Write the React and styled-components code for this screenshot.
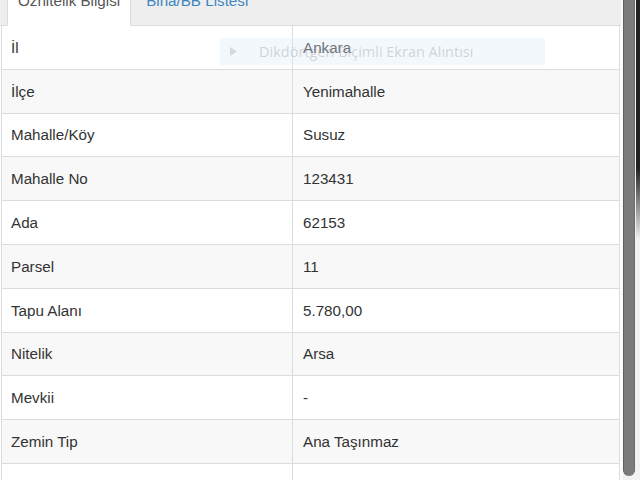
import React from "react";
import styled, { createGlobalStyle } from "styled-components";

const Global = createGlobalStyle`
  html, body { margin: 0; padding: 0; background: #fff; overflow: hidden; }
  body { font-family: "Liberation Sans", Arial, sans-serif; }
`;

const Page = styled.div`
  position: relative;
  display: flex;
  width: 640px;
  height: 480px;
  overflow: hidden;
`;

const Main = styled.div`
  width: 621px;
  display: flex;
  flex-direction: column;
  background: #fff;
`;

const TabBar = styled.div`
  display: flex;
  align-items: flex-end;
  gap: 4px;
  height: 38px;
  margin-top: -12px;
  padding-left: 7px;
  background: #eeeeee;
  border-bottom: 1px solid #dcdcdc;
  box-sizing: border-box;
  flex-shrink: 0;
`;

const Tab = styled.div`
  box-sizing: border-box;
  height: ${(p) => (p.$active ? "38px" : "37px")};
  margin-bottom: ${(p) => (p.$active ? "-1px" : "0")};
  padding: 2px 10px 0;
  font-size: 15.2px;
  line-height: 20px;
  color: ${(p) => (p.$active ? "#555" : "#3d86c0")};
  background: ${(p) => (p.$active ? "#fff" : "transparent")};
  border: 1px solid ${(p) => (p.$active ? "#dcdcdc" : "transparent")};
  border-bottom-color: transparent;
  white-space: nowrap;
`;

const Table = styled.div`
  margin: 0 1px;
  border-left: 1px solid #dcdcdc;
  border-right: 1px solid #dcdcdc;
`;

const Row = styled.div`
  display: grid;
  grid-template-columns: 291px 1fr;
  height: 43.8px;
  box-sizing: border-box;
  border-bottom: 1px solid #dcdcdc;
  background: ${(p) => (p.$striped ? "#f8f8f8" : "#fff")};
`;

const Cell = styled.div`
  display: flex;
  align-items: center;
  padding-left: ${(p) => (p.$label ? "9px" : "10px")};
  border-right: ${(p) => (p.$label ? "1px solid #dcdcdc" : "none")};
  font-size: 15.2px;
  color: #333;
  white-space: nowrap;
`;

const ScrollColumn = styled.div`
  width: 19px;
  display: flex;
  background: #f2f2f2;
  border-left: 2px solid #fafafa;
  box-sizing: border-box;
`;

const Thumb = styled.div`
  width: 13px;
  height: 476px;
  background: #7b7b7b;
  border-left: 1px solid #5f5f5f;
  border-right: 1px solid #6a6a6a;
  border-radius: 0 0 6px 6px;
  box-sizing: border-box;
`;

const Edge = styled.div`
  width: 4px;
  height: 240px;
  margin-left: 1px;
  background: linear-gradient(#222, #222 70%, #f2f2f2);
`;

const Snip = styled.div`
  position: absolute;
  left: 220px;
  top: 38px;
  width: 325px;
  height: 27px;
  display: flex;
  align-items: center;
  gap: 22px;
  padding-left: 10px;
  box-sizing: border-box;
  background: rgba(220, 236, 250, 0.35);
  pointer-events: none;
`;

const SnipText = styled.span`
  font-family: "Open Sans", "Liberation Sans", sans-serif;
  font-size: 14.5px;
  color: rgba(140, 140, 140, 0.35);
  white-space: nowrap;
`;

const rows = [
  ["İl", "Ankara"],
  ["İlçe", "Yenimahalle"],
  ["Mahalle/Köy", "Susuz"],
  ["Mahalle No", "123431"],
  ["Ada", "62153"],
  ["Parsel", "11"],
  ["Tapu Alanı", "5.780,00"],
  ["Nitelik", "Arsa"],
  ["Mevkii", "-"],
  ["Zemin Tip", "Ana Taşınmaz"],
  ["Zafiyet", ""],
];

export default function App() {
  return (
    <>
      <Global />
      <Page>
        <Main>
          <TabBar>
            <Tab $active>Öznitelik Bilgisi</Tab>
            <Tab>Bina/BB Listesi</Tab>
          </TabBar>
          <Table>
            {rows.map(([k, v], i) => (
              <Row key={k} $striped={i % 2 === 1}>
                <Cell $label>{k}</Cell>
                <Cell>{v}</Cell>
              </Row>
            ))}
          </Table>
        </Main>
        <ScrollColumn>
          <Thumb />
          <Edge />
        </ScrollColumn>
        <Snip>
          <svg width="7" height="9" viewBox="0 0 7 9">
            <path d="M0 0 L7 4.5 L0 9 Z" fill="rgba(170,170,170,0.4)" />
          </svg>
          <SnipText>Dikdörtgen Biçimli Ekran Alıntısı</SnipText>
        </Snip>
      </Page>
    </>
  );
}
